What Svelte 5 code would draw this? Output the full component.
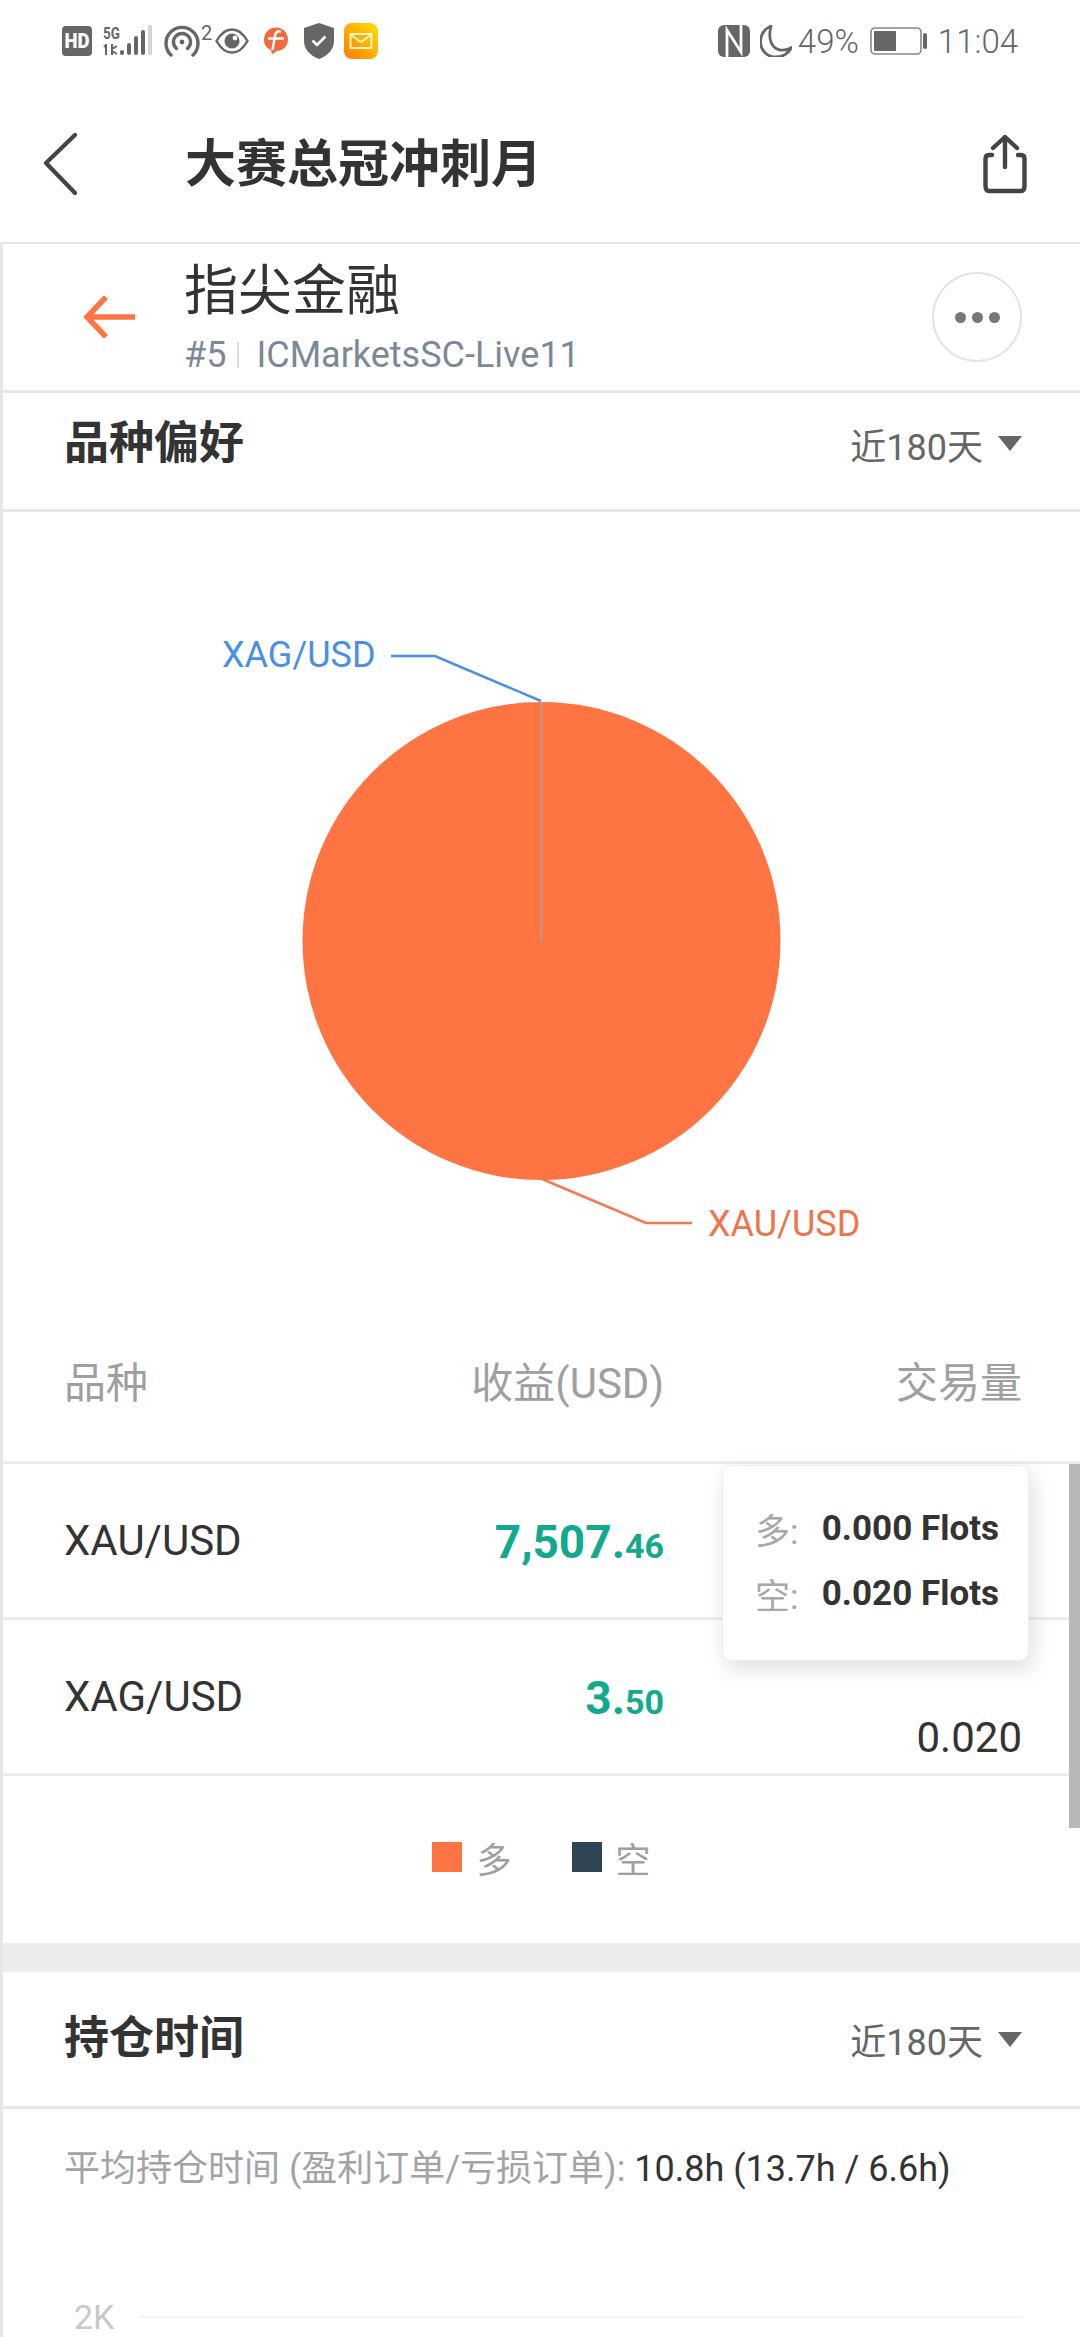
<!--
  Trader profile page: instrument preference pie, table with a volume tooltip,
  then the start of the holding time section.
-->
<script>
  const rows = [
    { name: 'XAU/USD', big: '7,507.', small: '46', volume: '' },
    { name: 'XAG/USD', big: '3.', small: '50', volume: '0.020' }
  ];
  const tip = [
    { label: '多', value: '0.000 Flots' },
    { label: '空', value: '0.020 Flots' }
  ];
</script>

<div class="screen">
  <div class="status">
    <div class="status-left">
      <svg class="s-hd" width="30" height="30" viewBox="0 0 30 30"><rect width="30" height="30" rx="4" fill="#666" /><text x="15" y="22" text-anchor="middle" font-size="20" font-weight="900" fill="#fff" font-family="Roboto" textLength="25" lengthAdjust="spacingAndGlyphs">HD</text></svg>
      <svg class="s-net" width="50" height="32" viewBox="0 0 50 32">
        <text x="0" y="14" font-size="16" font-weight="700" fill="#666" font-family="Roboto" textLength="17" lengthAdjust="spacingAndGlyphs">5G</text>
        <path d="M3 20l-2 2M3 19v11M9 19v11M9 24l5-3M9 26l5 3" stroke="#666" stroke-width="2" fill="none" />
        <rect x="17" y="25" width="4" height="5" rx="2" fill="#666" />
        <rect x="24" y="18" width="4" height="12" rx="2" fill="#666" />
        <rect x="31" y="11" width="4" height="19" rx="2" fill="#666" />
        <rect x="38" y="5" width="4" height="25" rx="2" fill="#666" />
        <rect x="45" y="0" width="4" height="30" rx="1" fill="#d4d4d4" />
      </svg>
      <svg class="s-spot" width="36" height="32" viewBox="0 0 36 32" fill="none" stroke="#666" stroke-width="3.4" stroke-linecap="round">
        <path d="M7 30A16 16 0 1 1 29 30" />
        <path d="M12.5 23.5A8.5 8.5 0 1 1 23.5 23.5" />
        <circle cx="18" cy="17" r="2.4" fill="#666" stroke="none" />
      </svg>
      <span class="s-two">2</span>
      <svg class="s-eye" width="34" height="28" viewBox="0 0 34 28">
        <path d="M1.5 14C6 6 11 2.5 17 2.5S28 6 32.5 14C28 22 23 25.5 17 25.5S6 22 1.5 14Z" fill="none" stroke="#666" stroke-width="2.4" />
        <circle cx="17" cy="14" r="7.5" fill="#666" />
        <circle cx="20" cy="11" r="2.4" fill="#fff" />
      </svg>
      <svg class="s-f" width="24" height="28" viewBox="0 0 24 28">
        <path d="M12 0.5C5 0.5 0 6 0 13C0 18 2.500 21 7 23L8 27.500L12.500 24C19 24 24 19 24 12.500C24 6 19 0.5 12 0.5Z" fill="#f4693c" />
        <path d="M17 4.500C13 3.500 11.500 6 11 9L8.500 23M4 11.500H20" fill="none" stroke="#fff" stroke-width="2.400" />
      </svg>
      <svg class="s-shield" width="30" height="36" viewBox="0 0 30 36">
        <path d="M15 0L30 5V18C30 27 23 33 15 36C7 33 0 27 0 18V5Z" fill="#666" />
        <path d="M8.500 17.500L13 22L21.500 13.500" fill="none" stroke="#fff" stroke-width="2.600" />
      </svg>
      <svg class="s-mail" width="34" height="36" viewBox="0 0 34 36">
        <defs>
          <linearGradient id="mailbg" x1="0" y1="1" x2="1" y2="0">
            <stop offset="0" stop-color="#ff7a00" />
            <stop offset="1" stop-color="#f9e20c" />
          </linearGradient>
        </defs>
        <rect width="34" height="36" rx="8" fill="url(#mailbg)" />
        <rect x="6.500" y="11" width="21" height="14" fill="none" stroke="#fff5c0" stroke-width="2" />
        <path d="M7 12L17 19L27 12" fill="none" stroke="#fff5c0" stroke-width="2" />
      </svg>
    </div>
    <div class="status-right">
      <svg width="32" height="32" viewBox="0 0 32 32">
        <rect width="32" height="32" rx="6" fill="#666" />
        <path d="M9 32V5L23 27V0" fill="none" stroke="#fff" stroke-width="2.800" />
      </svg>
      <svg class="s-moon" width="32" height="32" viewBox="0 0 32 32">
        <path d="M11 1C4.500 4 0.500 10 0.500 17C0.500 25.500 7.500 32 16 32C23 32 29 28 31.500 22.500C28 25 24 25.500 20 25C12 23.500 7.500 14.500 11 1Z" fill="none" stroke="#666" stroke-width="2.800" stroke-linejoin="round" />
      </svg>
      <span class="s-pct">49%</span>
      <svg class="s-batt" width="58" height="28" viewBox="0 0 58 28">
        <rect x="1" y="1" width="50" height="26" rx="4" fill="none" stroke="#888" stroke-width="1.600" />
        <rect x="4" y="4" width="22" height="20" rx="1" fill="#666" />
        <rect x="53" y="6" width="4" height="16" rx="2" fill="#666" />
      </svg>
      <span class="s-time">11:04</span>
    </div>
  </div>

  <div class="nav">
    <svg class="nav-back" width="34" height="62" viewBox="0 0 34 62" fill="none" stroke="#444" stroke-width="4.200" stroke-linecap="round" stroke-linejoin="round"><path d="M32 2L3 30L32 60" /></svg>
    <h1>大赛总冠冲刺月</h1>
    <svg class="nav-share" width="44" height="60" viewBox="0 0 44 60" fill="none" stroke="#444" stroke-width="4.400" stroke-linecap="round" stroke-linejoin="round">
      <path d="M9 21H6Q2.500 21 2.500 25V52Q2.500 57 6 57H38Q41.500 57 41.500 52V25Q41.500 21 38 21H35" />
      <path d="M22 33V3M10 14L22 3L34 14" />
    </svg>
  </div>

  <div class="page">
    <div class="trader">
      <svg class="trader-back" width="52" height="42" viewBox="0 0 52 42" fill="none" stroke="#ff7443" stroke-width="5.500"><path d="M52 21H5M23 1L4 21L23 41" /></svg>
      <div class="trader-text">
        <div class="trader-name">指尖金融</div>
        <div class="trader-sub"><span>#5</span><i></i><span>ICMarketsSC-Live11</span></div>
      </div>
      <div class="more"><b></b><b></b><b></b></div>
    </div>

    <div class="sec-head first">
      <h2>品种偏好</h2>
      <div class="range">近180天<i></i></div>
    </div>

    <svg class="pie" width="1077" height="799" viewBox="3 512 1077 799">
      <circle cx="541.500" cy="941" r="239" fill="#ff7443" />
      <line x1="541.500" y1="702" x2="541.500" y2="941" stroke="#b3a0a4" stroke-width="1.500" />
      <polyline points="391,656 435,656 541,701" fill="none" stroke="#4a90e2" stroke-width="2.500" />
      <polyline points="542,1179 646,1223 692,1223" fill="none" stroke="#f27a52" stroke-width="2.500" />
      <text x="222" y="667" class="pie-label" fill="#4a90e2">XAG/USD</text>
      <text x="708" y="1236" class="pie-label" fill="#f0744a">XAU/USD</text>
    </svg>

    <div class="thead">
      <span class="c-name">品种</span>
      <span class="c-gain">收益(USD)</span>
      <span class="c-vol">交易量</span>
    </div>
    {#each rows as row}
      <div class="row">
        <span class="c-name">{row.name}</span>
        <span class="c-gain gain">{row.big}<small>{row.small}</small></span>
        <span class="c-vol vol">{row.volume}</span>
      </div>
    {/each}

    <div class="legend">
      <span class="key"><i class="orange"></i>多</span>
      <span class="key"><i class="navy"></i>空</span>
    </div>

    <div class="band"></div>

    <div class="sec-head">
      <h2>持仓时间</h2>
      <div class="range">近180天<i></i></div>
    </div>

    <p class="avg">平均持仓时间 (盈利订单/亏损订单): <span>10.8h (13.7h / 6.6h)</span></p>

    <div class="axis"><span>2K</span><i></i></div>

    <div class="tooltip">
      {#each tip as t}
        <div class="tip-row"><span>{t.label}:</span><b>{t.value}</b></div>
      {/each}
    </div>
    <div class="scroll"></div>
  </div>
</div>

<style>
  :global(body) {
    margin: 0;
    background: #fff;
  }
  .screen {
    width: 1080px;
    height: 2340px;
    overflow: hidden;
    font-family: Roboto, 'Noto Sans CJK SC', sans-serif;
    color: #333;
  }
  .status {
    height: 80px;
    display: flex;
    justify-content: space-between;
    align-items: center;
    padding: 2px 62px 0;
    box-sizing: border-box;
    color: #666;
  }
  .status-left,
  .status-right {
    display: flex;
    align-items: center;
  }
  .s-net { margin-left: 11px; }
  .s-spot { margin-left: 11px; }
  .s-two { font-size: 20px; width: 13px; margin-left: 1px; margin-top: -16px; }
  .s-eye { margin-left: 1px; }
  .s-f { margin-left: 15px; }
  .s-shield { margin-left: 16px; }
  .s-mail { margin-left: 10px; }
  .s-moon { margin-left: 10px; }
  .s-pct, .s-time { font-size: 33px; font-weight: 300; line-height: 1; }
  .s-pct { margin-left: 6px; }
  .s-batt { margin-left: 11px; }
  .s-time { margin-left: 10px; }

  .nav {
    height: 162px;
    display: flex;
    align-items: center;
    padding: 0 53px 0 43px;
    border-bottom: 2px solid #e6e6e6;
  }
  .nav-back { margin-top: 5px; }
  .nav h1 {
    flex: 1;
    margin: 7px 0 0 108px;
    font-size: 51px;
    line-height: 1;
    font-weight: 700;
    color: #333;
  }
  .nav-share { margin-top: 6px; }

  .page {
    position: relative;
    border-left: 3px solid #e6e6e6;
  }
  .trader {
    height: 146px;
    display: flex;
    align-items: center;
    padding: 0 58px 0 80px;
    border-bottom: 3px solid #e8e8e8;
  }
  .trader-text { flex: 1; margin-left: 49px; margin-top: 2px; }
  .trader-name { font-size: 54px; line-height: 62px; color: #333; }
  .trader-sub {
    display: flex;
    align-items: center;
    margin-top: 11px;
    font-size: 36px;
    line-height: 42px;
    color: #7d8896;
  }
  .trader-sub i {
    width: 2px;
    height: 26px;
    margin: 0 17px 0 11px;
    background: #dcdcdc;
  }
  .more {
    width: 86px;
    height: 86px;
    display: flex;
    justify-content: center;
    align-items: center;
    gap: 6px;
    border: 2px solid #e4e4e4;
    border-radius: 50%;
  }
  .more b {
    width: 11px;
    height: 11px;
    border-radius: 50%;
    background: #777;
  }

  .sec-head {
    height: 137px;
    display: flex;
    justify-content: space-between;
    align-items: center;
    padding: 0 58px 6px 61px;
    box-sizing: border-box;
    border-bottom: 3px solid #e8e8e8;
  }
  .sec-head.first {
    height: 119px;
    padding-bottom: 21px;
  }
  .sec-head h2 {
    margin: 6px 0 0;
    font-size: 45px;
    line-height: 52px;
    font-weight: 700;
    color: #333;
  }
  .range {
    display: flex;
    align-items: center;
    font-size: 36px;
    color: #666;
    margin-top: 6px;
  }
  .range i {
    margin-left: 15px;
    border-left: 12px solid transparent;
    border-right: 12px solid transparent;
    border-top: 15px solid #666;
  }

  .pie { display: block; }
  .pie-label {
    font-size: 36px;
    font-family: Roboto, sans-serif;
  }

  .thead,
  .row {
    display: grid;
    grid-template-columns: 290px 310px 1fr;
    padding: 0 58px 0 61px;
    box-sizing: border-box;
  }
  .thead {
    height: 153px;
    align-items: center;
    padding-bottom: 14px;
    font-size: 42px;
    color: #9f9f9f;
    border-bottom: 3px solid #ededed;
  }
  .row {
    height: 156px;
    align-items: center;
    font-size: 42px;
    color: #333;
    border-bottom: 3px solid #ededed;
  }
  .c-gain,
  .c-vol { text-align: right; }
  .gain {
    font-size: 46px;
    font-weight: 700;
    color: #13a98c;
    padding-top: 3px;
  }
  .gain small {
    font-size: 34px;
    font-weight: 700;
  }
  .vol {
    align-self: end;
    padding-bottom: 11px;
    line-height: 48px;
    height: 48px;
  }

  .legend {
    height: 167px;
    display: flex;
    justify-content: center;
    align-items: center;
    gap: 60px;
    padding: 0 0 5px 0;
    box-sizing: border-box;
    font-size: 35px;
    color: #9f9f9f;
  }
  .key {
    display: flex;
    align-items: center;
    gap: 14px;
  }
  .key i {
    width: 30px;
    height: 30px;
  }
  .orange { background: #ff7443; }
  .navy { background: #2f4554; }

  .band {
    height: 29px;
    background: #ebecec;
  }

  .avg {
    margin: 0;
    padding: 35px 61px 0;
    font-size: 36px;
    line-height: 50px;
    color: #a3a3a3;
  }
  .avg span { color: #333; }
  .axis {
    display: flex;
    align-items: center;
    gap: 25px;
    margin-top: 103px;
    padding: 0 58px 0 71px;
    font-size: 34px;
    color: #c8c8c8;
  }
  .axis i {
    flex: 1;
    height: 2px;
    background: #f3f3f3;
  }

  .tooltip {
    position: absolute;
    left: 719px;
    top: 1221px;
    width: 307px;
    height: 196px;
    box-sizing: border-box;
    padding: 30px 29px 0 32px;
    background: #fff;
    border: 1px solid #eee;
    border-radius: 10px;
    box-shadow: 4px 8px 22px rgb(0 0 0 / 0.13);
  }
  .tip-row {
    display: flex;
    justify-content: space-between;
    align-items: center;
    height: 65px;
    font-size: 35px;
  }
  .tip-row span { color: #a8a8a8; }
  .tip-row b { color: #333; font-weight: 700; }
  .scroll {
    position: absolute;
    right: 0;
    top: 1220px;
    width: 11px;
    height: 364px;
    background: #b8b8b8;
  }
</style>
